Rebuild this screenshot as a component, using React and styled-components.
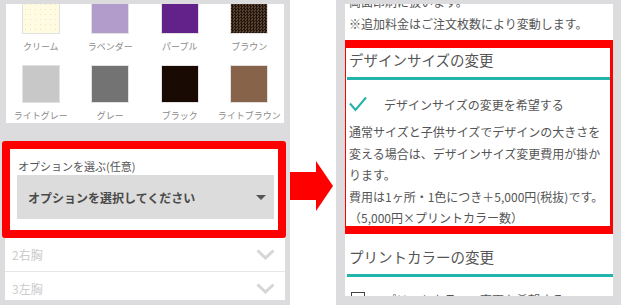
import React from "react";
import styled, { createGlobalStyle } from "styled-components";

const GlobalStyle = createGlobalStyle`
  html, body {
    margin: 0;
    padding: 0;
    background: #ffffff;
    overflow: hidden;
  }
  body {
    font-family: "Noto Sans CJK JP", "Noto Sans", sans-serif;
  }
  * {
    box-sizing: border-box;
  }
`;

const swatches = [
  { name: "クリーム", color: "#fffbe2", pattern: "dots" },
  { name: "ラベンダー", color: "#b19ccb" },
  { name: "パープル", color: "#63218a" },
  { name: "ブラウン", color: "#3b2a1e", pattern: "check" },
  { name: "ライトグレー", color: "#c8c8c8" },
  { name: "グレー", color: "#737373" },
  { name: "ブラック", color: "#190b03" },
  { name: "ライトブラウン", color: "#87634a" },
];

const patterns = {
  dots: `
    background-image: radial-gradient(#f1e6b8 0.6px, transparent 0.9px);
    background-size: 5px 5px;
  `,
  check: `
    background-image: repeating-conic-gradient(#23160e 0 25%, #5b4332 0 50%);
    background-size: 3px 3px;
  `,
};

const App = () => {
  return (
    <>
      <GlobalStyle />
      <Page>
        <LeftPanel>
          <ColorCard>
            <SwatchGrid>
              {swatches.map((s) => (
                <SwatchCell key={s.name}>
                  <Swatch $color={s.color} $pattern={s.pattern} />
                  <SwatchLabel>{s.name}</SwatchLabel>
                </SwatchCell>
              ))}
            </SwatchGrid>
          </ColorCard>

          <Highlight $top={18} $left={-4} $right={-2} $height={97}>
            <OptionField>
              <FieldLabel>オプションを選ぶ(任意)</FieldLabel>
              <SelectBox>
                <SelectText>オプションを選択してください</SelectText>
                <Caret />
              </SelectBox>
            </OptionField>
          </Highlight>

          <AccordionList>
            <AccordionRow>
              <RowLabel>2右胸</RowLabel>
              <Chevron />
            </AccordionRow>
            <AccordionRow>
              <RowLabel>3左胸</RowLabel>
              <Chevron />
            </AccordionRow>
          </AccordionList>
        </LeftPanel>

        <ArrowColumn>
          <svg width="43" height="50" viewBox="0 0 43 50">
            <polygon
              points="0,11 26,11 26,0 43,25 26,50 26,39 0,39"
              fill="#ff0000"
            />
          </svg>
        </ArrowColumn>

        <RightPanel>
          <DetailCard>
            <Note>
              <NoteLine>両面印刷に扱います。</NoteLine>
              <NoteLine>※追加料金はご注文枚数により変動します。</NoteLine>
            </Note>

            <Highlight $top={5} $left={-7} $right={-5} $height={194}>
              <Section $inset={1}>
                <SectionTitle>デザインサイズの変更</SectionTitle>
                <Rule />
                <CheckRow>
                  <CheckSlot>
                    <svg width="18" height="16" viewBox="0 0 18 16">
                      <path
                        d="M1 7.5 L6.5 14 L17 1.5"
                        fill="none"
                        stroke="#23b1a9"
                        strokeWidth="2"
                      />
                    </svg>
                  </CheckSlot>
                  <CheckText>デザインサイズの変更を希望する</CheckText>
                </CheckRow>
                <Description>
                  <Line>通常サイズと子供サイズでデザインの大きさを</Line>
                  <Line>変える場合は、デザインサイズ変更費用が掛か</Line>
                  <Line>ります。</Line>
                  <Line>費用は1ヶ所・1色につき＋5,000円(税抜)です。</Line>
                  <Line>（5,000円×プリントカラー数）</Line>
                </Description>
              </Section>
            </Highlight>

            <Section $inset={2} $top={11}>
              <SectionTitle>プリントカラーの変更</SectionTitle>
              <Rule />
              <CheckRow $top={12}>
                <CheckSlot>
                  <Checkbox />
                </CheckSlot>
                <CheckText>プリントカラーの変更を希望する</CheckText>
              </CheckRow>
            </Section>
          </DetailCard>
        </RightPanel>
      </Page>
    </>
  );
};

const Chevron = () => (
  <ChevronIcon width="19" height="11" viewBox="0 0 19 11">
    <path d="M1.5 1.5 L9.5 9 L17.5 1.5" fill="none" stroke="#d6d6d6" strokeWidth="3" />
  </ChevronIcon>
);

const Page = styled.div`
  display: flex;
  width: 621px;
  height: 305px;
`;

const LeftPanel = styled.div`
  width: 290px;
  height: 305px;
  background: #dcdcde;
  padding: 4px 6px 0;
  display: flex;
  flex-direction: column;
`;

const ColorCard = styled.div`
  background: #ffffff;
  height: 119px;
  overflow: hidden;
`;

const SwatchGrid = styled.div`
  display: grid;
  grid-template-columns: repeat(4, 1fr);
  row-gap: 12px;
  margin-top: -8px;
`;

const SwatchCell = styled.div`
  display: flex;
  flex-direction: column;
  align-items: center;
`;

const Swatch = styled.div`
  width: 38px;
  height: 38px;
  background-color: ${({ $color }) => $color};
  border: 1px solid #e2e2e2;
  ${({ $pattern }) => ($pattern ? patterns[$pattern] : "")}
`;

const SwatchLabel = styled.div`
  margin-top: 7px;
  font-size: 9px;
  line-height: 12px;
  color: #8a8a8a;
  white-space: nowrap;
`;

const Highlight = styled.div`
  margin: ${({ $top }) => $top}px ${({ $right }) => $right}px 0
    ${({ $left }) => $left}px;
  height: ${({ $height }) => $height}px;
  border: 8px solid #ff0000;
  border-radius: 3px;
  background: #ffffff;
`;

const OptionField = styled.div`
  padding: 10px 4px 0 7px;
`;

const FieldLabel = styled.div`
  font-size: 11px;
  line-height: 14px;
  color: #555555;
  padding-left: 1px;
`;

const SelectBox = styled.div`
  margin-top: 2px;
  height: 44px;
  background: #dcdcdc;
  display: flex;
  align-items: center;
  justify-content: space-between;
  padding: 0 8px 0 11px;
`;

const SelectText = styled.span`
  font-size: 12px;
  font-weight: 700;
  color: #4a4a4a;
`;

const Caret = styled.span`
  width: 0;
  height: 0;
  border-left: 5px solid transparent;
  border-right: 5px solid transparent;
  border-top: 5px solid #555555;
`;

const AccordionList = styled.div`
  margin: 0 -1px;
  height: 62px;
  overflow: hidden;
  background: #ffffff;
`;

const AccordionRow = styled.div`
  height: 34px;
  display: flex;
  align-items: center;
  justify-content: space-between;
  padding: 0 10px 0 7px;
  border-bottom: 1px solid #e6e6e6;
`;

const RowLabel = styled.span`
  font-size: 12px;
  color: #cccccc;
`;

const ChevronIcon = styled.svg`
  display: block;
`;

const ArrowColumn = styled.div`
  width: 46px;
  padding-top: 161px;
`;

const RightPanel = styled.div`
  width: 285px;
  height: 305px;
  background: #dcdcde;
  padding: 4px 8px 9px 9px;
`;

const DetailCard = styled.div`
  background: #ffffff;
  height: 100%;
  overflow: hidden;
  color: #555555;
`;

const Note = styled.div`
  margin-top: -13px;
  padding-left: 4px;
`;

const NoteLine = styled.div`
  font-size: 12px;
  line-height: 22px;
  white-space: nowrap;
`;

const Section = styled.div`
  margin-top: ${({ $top }) => $top || 0}px;
  padding-left: ${({ $inset }) => $inset}px;
`;

const SectionTitle = styled.div`
  padding: 2px 0 0 2px;
  font-size: 14.5px;
  line-height: 20px;
  color: #555555;
`;

const Rule = styled.div`
  margin-top: 7px;
  height: 3px;
  background: #22b3ab;
`;

const CheckRow = styled.div`
  margin-top: ${({ $top }) => $top || 14}px;
  height: 20px;
  display: flex;
  align-items: center;
  gap: 17px;
  padding-left: 2px;
`;

const CheckSlot = styled.span`
  width: 18px;
  display: flex;
  justify-content: center;
`;

const Checkbox = styled.span`
  width: 14px;
  height: 14px;
  border: 1.5px solid #444444;
`;

const CheckText = styled.span`
  font-size: 12px;
  color: #555555;
  white-space: nowrap;
`;

const Description = styled.div`
  margin-top: 7px;
  padding-left: 2px;
`;

const Line = styled.div`
  font-size: 12px;
  line-height: 21.5px;
  white-space: nowrap;
`;

export default App;
